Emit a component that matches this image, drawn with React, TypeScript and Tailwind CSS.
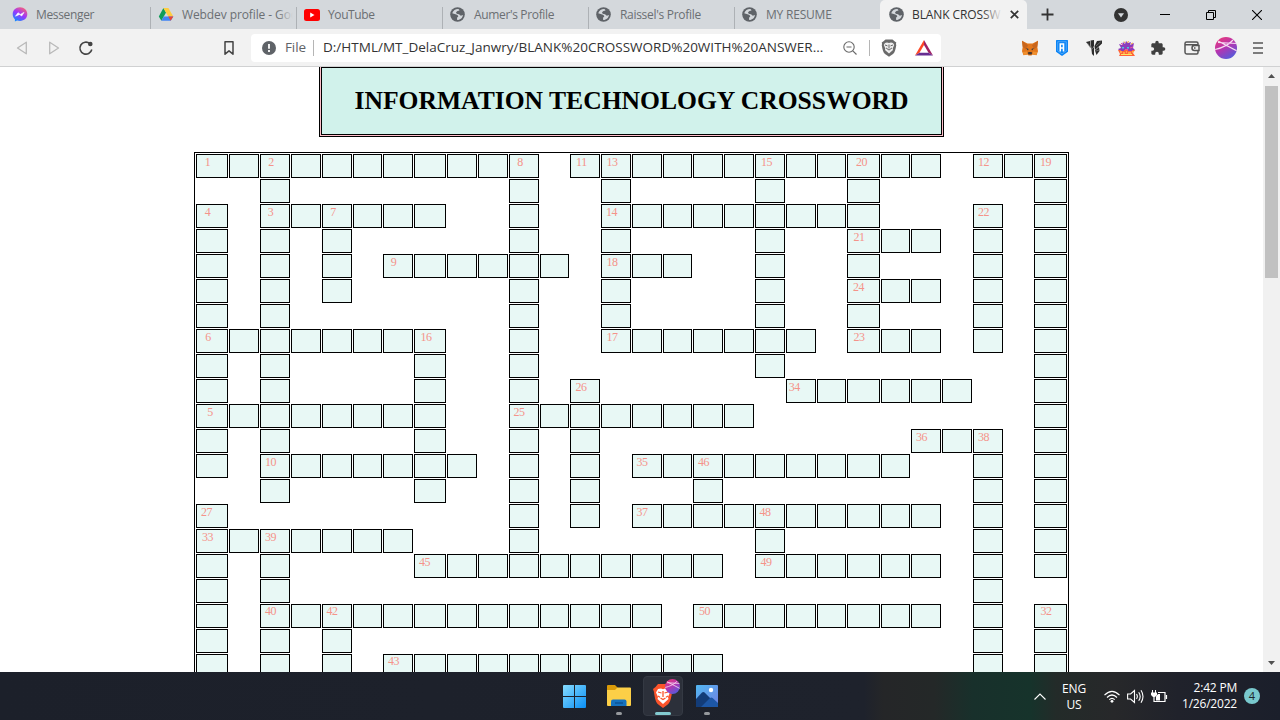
import React from "react";

type Tab = { title: string; icon: "messenger" | "drive" | "youtube" | "globe"; width: string; sep: boolean; tracking: string };

const tabs: Tab[] = [
  { title: "Messenger", icon: "messenger", width: "w-[151px] gap-2 pl-3", sep: true, tracking: "tracking-[-0.35px]" },
  { title: "Webdev profile - Goo", icon: "drive", width: "w-[146px] gap-2 pl-[7px]", sep: true, tracking: "tracking-[-0.1px]" },
  { title: "YouTube", icon: "youtube", width: "w-[146px] gap-2 pl-[7px]", sep: true, tracking: "tracking-[-0.4px]" },
  { title: "Aumer's Profile", icon: "globe", width: "w-[146px] gap-[9px] pl-[7px]", sep: true, tracking: "tracking-[-0.35px]" },
  { title: "Raissel's Profile", icon: "globe", width: "w-[146px] gap-[9px] pl-[7px]", sep: true, tracking: "tracking-[-0.3px]" },
  { title: "MY RESUME", icon: "globe", width: "w-[145px] gap-[9px] pl-[7px]", sep: false, tracking: "tracking-[-0.2px]" },
];

const columnWidths = [32, 30, 30, 30, 30, 29, 30, 32, 30, 30, 30, 29, 30, 30, 30, 29, 30, 30, 30, 30, 29, 33, 29, 30, 30, 30, 29, 33];

const rowSpans: [number, number][][] = [
  [[1, 11], [13, 24], [26, 28]],
  [[3, 3], [11, 11], [14, 14], [19, 19], [22, 22], [28, 28]],
  [[1, 1], [3, 8], [11, 11], [14, 22], [26, 26], [28, 28]],
  [[1, 1], [3, 3], [5, 5], [11, 11], [14, 14], [19, 19], [22, 24], [26, 26], [28, 28]],
  [[1, 1], [3, 3], [5, 5], [7, 12], [14, 16], [19, 19], [22, 22], [26, 26], [28, 28]],
  [[1, 1], [3, 3], [5, 5], [11, 11], [14, 14], [19, 19], [22, 24], [26, 26], [28, 28]],
  [[1, 1], [3, 3], [11, 11], [14, 14], [19, 19], [22, 22], [26, 26], [28, 28]],
  [[1, 8], [11, 11], [14, 20], [22, 24], [26, 26], [28, 28]],
  [[1, 1], [3, 3], [8, 8], [11, 11], [19, 19], [28, 28]],
  [[1, 1], [3, 3], [8, 8], [11, 11], [13, 13], [20, 25], [28, 28]],
  [[1, 8], [11, 18], [28, 28]],
  [[1, 1], [3, 3], [8, 8], [11, 11], [13, 13], [24, 26], [28, 28]],
  [[1, 1], [3, 9], [11, 11], [13, 13], [15, 23], [26, 26], [28, 28]],
  [[3, 3], [8, 8], [11, 11], [13, 13], [17, 17], [26, 26], [28, 28]],
  [[1, 1], [11, 11], [13, 13], [15, 24], [26, 26], [28, 28]],
  [[1, 7], [11, 11], [19, 19], [26, 26], [28, 28]],
  [[1, 1], [3, 3], [8, 17], [19, 24], [26, 26], [28, 28]],
  [[1, 1], [3, 3], [26, 26]],
  [[1, 1], [3, 15], [17, 24], [26, 26], [28, 28]],
  [[1, 1], [3, 3], [5, 5], [26, 26], [28, 28]],
  [[1, 1], [3, 3], [5, 5], [7, 17], [26, 26], [28, 28]],
];

// "row-column": [clue number, distance from the cell's edge to the middle of the number]
const clues: Record<string, [number, number]> = {
  "0-1": [1, 11.5], "0-3": [2, 11], "0-11": [8, 11], "0-13": [11, 11.5], "0-14": [13, 11], "0-19": [15, 11.5],
  "0-22": [20, 14.5], "0-26": [12, 10.7], "0-28": [19, 11.5],
  "2-1": [4, 11.5], "2-3": [3, 10.5], "2-5": [7, 11], "2-14": [14, 10.5], "2-26": [22, 10.5],
  "3-22": [21, 12], "4-7": [9, 10.5], "4-14": [18, 11], "5-22": [24, 11.7],
  "7-1": [6, 12], "7-8": [16, 12], "7-14": [17, 11], "7-22": [23, 12],
  "9-13": [26, 11], "9-20": [34, 8.3], "10-1": [5, 14], "10-11": [25, 10],
  "11-24": [36, 10.5], "11-26": [38, 10.5], "12-3": [10, 10.5], "12-15": [35, 10], "12-17": [46, 10.5],
  "14-1": [27, 10.5], "14-15": [37, 10], "14-19": [48, 10], "15-1": [33, 11.5], "15-3": [39, 10.5],
  "16-8": [45, 10.5], "16-19": [49, 11], "18-3": [40, 10.5], "18-5": [42, 10], "18-17": [50, 11.5], "18-28": [32, 12],
  "20-7": [43, 10.5],
};

function Globe() {
  return (
    <svg className="h-[15px] w-[15px] shrink-0" viewBox="0 0 15 15">
      <circle cx="7.5" cy="7.5" r="7.3" fill="#5f6368" />
      <path d="M8 2C5.600 2 3 3.500 2.200 6.200L5.500 7.300L7.500 8L8.300 9.500L7 10.800L7.200 13C10.500 13 12.800 10.700 13 7.500L10.500 6.800L8.600 7L7 5.700L8.200 4.600L10.500 4.200L10 2.500Z" fill="#d4d8dc" />
      <path d="M8.600 1.800L9.500 3.500L7.500 4L6 5.200L6.700 6.700L9 7.300L10.800 8.700L13 8V5L11 2.500Z" fill="#5f6368" />
    </svg>
  );
}

function TabIcon({ kind }: { kind: Tab["icon"] }) {
  if (kind === "messenger")
    return (
      <svg className="h-[15px] w-[16px] shrink-0" viewBox="0 0 16 15">
        <defs>
          <linearGradient id="msg" x1="0.2" y1="1" x2="0.8" y2="0">
            <stop offset="0" stopColor="#0a90ff" />
            <stop offset="0.5" stopColor="#9a36ff" />
            <stop offset="1" stopColor="#ff6470" />
          </linearGradient>
        </defs>
        <path d="M8 .2C3.700.200.700 3.200.700 7.200c0 2.100.8 3.800 2.200 5.100v2.200l2.200-.9c.9.300 1.900.4 2.900.4 4.300 0 7.300-3 7.300-6.900S12.300.200 8 .2z" fill="url(#msg)" />
        <path d="M3.500 9.200L6 5.700l2.300 1.700 3.700-2L9.700 9 7.500 7.400z" fill="#fff" stroke="#fff" strokeWidth=".6" />
      </svg>
    );
  if (kind === "drive")
    return (
      <svg className="h-[15px] w-[16px] shrink-0" viewBox="0 0 16 15">
        <path d="M5.400 1L.8 9.400l2.600 4.300L8 5.500z" fill="#0f9d58" />
        <path d="M5.400 1h5l4.900 8.400h-5z" fill="#ffcd40" />
        <path d="M5.800 9.400h9.500l-2.600 4.400H3.300z" fill="#4285f4" />
        <path d="M12.700 13.800l2.600-4.400h-5z" fill="#ea4335" />
      </svg>
    );
  if (kind === "youtube")
    return (
      <svg className="h-[12px] w-[16px] shrink-0" viewBox="0 0 16 12">
        <rect width="16" height="12" rx="2.500" fill="#f00" />
        <path d="M6.200 3.500v5L10.500 6z" fill="#fff" />
      </svg>
    );
  return <Globe />;
}

function TabStrip() {
  return (
    <div className="flex h-[29px] bg-[#d4d8dc] text-[12px] text-[#6b6f73]">
      {tabs.map((t, i) => (
        <div key={i} className={`relative flex shrink-0 items-center overflow-hidden whitespace-nowrap ${t.width}`}>
          <TabIcon kind={t.icon} />
          <span className={t.tracking}>{t.title}</span>
          {i === 1 && <span className="absolute right-0 h-full w-5 bg-linear-to-r from-transparent to-[#d4d8dc] to-80%" />}
          {t.sep && <span className="absolute right-0 bottom-0 h-[22px] w-px bg-[#adb1b5]" />}
        </div>
      ))}
      <div className="flex w-[147px] shrink-0 items-center rounded-t-[5px] bg-[#f2f2f2] pl-[9px] text-[#333]">
        <Globe />
        <div className="relative ml-2 w-[90px] whitespace-nowrap tracking-[-0.1px]">
          BLANK CROSSW
          <span className="absolute top-0 right-0 h-full w-5 bg-linear-to-r from-transparent to-[#f2f2f2]" />
        </div>
        <svg className="ml-[8px] h-[9px] w-[9px]" viewBox="0 0 9 9"><path d="M.8.800l7.400 7.400M8.200.800L.8 8.200" stroke="#333" strokeWidth="1.700" /></svg>
      </div>
      <div className="flex grow items-center text-black">
        <svg className="ml-[14px] h-[13px] w-[13px]" viewBox="0 0 13 13"><path d="M6.500.500v12M.5 6.500h12" stroke="#333" strokeWidth="1.800" /></svg>
        <svg className="ml-[60px] h-[14px] w-[14px]" viewBox="0 0 14 14"><circle cx="7" cy="7" r="7" fill="#333" /><path d="M4 5.300h6L7 9.500z" fill="#d4d8dc" /></svg>
        <svg className="ml-8 h-[10px] w-[10px]" viewBox="0 0 10 10"><path d="M0 4.500h10" stroke="#000" /></svg>
        <svg className="ml-9 h-[10px] w-[10px]" viewBox="0 0 10 10"><path d="M.5 2.500h7v7h-7zM2.500 2.500v-2h7v7h-2" fill="none" stroke="#000" /></svg>
        <svg className="ml-9 h-[10px] w-[10px]" viewBox="0 0 10 10"><path d="M0 0l10 10M10 0L0 10" stroke="#000" strokeWidth="1.100" /></svg>
      </div>
    </div>
  );
}

function Ball({ size }: { size: string }) {
  return (
    <svg className={size} viewBox="0 0 22 22">
      <defs>
        <linearGradient id="ball" x1="0.2" y1="0" x2="0.8" y2="1">
          <stop offset="0" stopColor="#e83a7c" />
          <stop offset="0.45" stopColor="#b534b0" />
          <stop offset="1" stopColor="#4b5fe0" />
        </linearGradient>
        <clipPath id="ballclip"><circle cx="11" cy="11" r="11" /></clipPath>
      </defs>
      <g clipPath="url(#ballclip)">
        <rect width="22" height="22" fill="url(#ball)" />
        <path d="M3 4L22 14M0 12.500C7 11 14 7.500 18 3M3 5.500L22 6.500" stroke="#f6dcf2" strokeWidth="1.200" fill="none" />
      </g>
    </svg>
  );
}

function Toolbar() {
  return (
    <div className="flex h-[38px] items-center border-b border-[#d0d1d2] bg-[#f2f2f2]">
      <svg className="ml-[16px] h-[16px] w-[12px]" viewBox="0 0 12 16"><path d="M10.300 2.200v11.600L1.500 8z" fill="none" stroke="#b9b9b9" strokeWidth="1.300" strokeLinejoin="round" /></svg>
      <svg className="ml-[20px] h-[16px] w-[12px]" viewBox="0 0 12 16"><path d="M1.700 2.200v11.600L10.500 8z" fill="none" stroke="#b9b9b9" strokeWidth="1.300" strokeLinejoin="round" /></svg>
      <svg className="ml-[18px] h-[16px] w-[16px]" viewBox="0 0 16 16"><path d="M11.800 3.500A6 6 0 1 0 13.800 9.500" fill="none" stroke="#444" strokeWidth="1.600" /><circle cx="12.300" cy="4" r="2.300" fill="#444" /></svg>
      <svg className="ml-[129px] h-[16px] w-[12px]" viewBox="0 0 12 16"><path d="M2 1.800h8v12.400l-4-3.300-4 3.300z" fill="none" stroke="#444" strokeWidth="1.500" strokeLinejoin="round" /></svg>
      <div className="ml-[16px] flex h-[28px] w-[690px] shrink-0 items-center rounded-[4px] bg-white text-[#333]">
        <svg className="ml-[11px] h-[14px] w-[14px] shrink-0" viewBox="0 0 14 14"><circle cx="7" cy="7" r="7" fill="#5f6368" /><path d="M7 3v4.800M7 9v2" stroke="#fff" strokeWidth="1.800" /></svg>
        <span className="ml-[9px] w-[28px] whitespace-nowrap text-[13.500px] tracking-[-0.1px] text-[#5f6368]">File</span>
        <span className="h-4 w-px bg-[#b5b5b5]" />
        <span className="ml-[9px] w-[514px] whitespace-nowrap text-[13.500px] tracking-[0.01px]">D:/HTML/MT_DelaCruz_Janwry/BLANK%20CROSSWORD%20WITH%20ANSWER...</span>
        <svg className="ml-[6px] h-[14px] w-[14px] shrink-0" viewBox="0 0 14 14"><circle cx="6" cy="6" r="5.200" fill="none" stroke="#6a6a6a" strokeWidth="1.100" /><path d="M3.500 6h5M9.800 9.800l3.700 3.700" stroke="#6a6a6a" strokeWidth="1.200" /></svg>
        <span className="ml-3 h-4 w-px bg-[#b5b5b5]" />
        <svg className="ml-[11px] h-[18px] w-[16px] shrink-0" viewBox="0 0 16 18">
          <path d="M4.500.500h7l2 1.800 1.800 1.200-.4 1.500.4 1c-.8 5-1.500 7.600-3.300 9L8 17.700l-4-2.700C2.200 13.600 1.500 11 .7 6l.4-1-.4-1.500 1.800-1.200z" fill="#6a6a6a" />
          <path d="M4 4l2-.4 2 .5 2-.5 2 .4 1.200 2-1.500 3.600.3 1.400L8 14.500 4 11l.3-1.400L2.800 6z" fill="#eee" />
          <path d="M4 6l2.500.900M12 6l-2.500.900M8 5.500v4M6.300 10L8 11l1.700-1M5 9l1.500.800M11 9l-1.500.800" stroke="#666" strokeWidth="1" fill="none" />
        </svg>
        <svg className="ml-[18px] h-[16px] w-[18px] shrink-0" viewBox="0 0 18 16">
          <path d="M9 0L0 15.500l4.500-2.700L9 5z" fill="#ff4724" />
          <path d="M9 0l9 15.500-4.500-2.700L9 5z" fill="#9e1f63" />
          <path d="M0 15.500h18l-4.500-2.800h-9z" fill="#662d91" />
        </svg>
      </div>
      <svg className="ml-[81px] h-[16px] w-[16px] shrink-0" viewBox="0 0 16 16">
        <path d="M0 .8l5.500 2.700h5L16 .8l-.7 6 .7 4.500-1.500 3.900-4-.7-1 .9h-3l-1-.9-4 .7L0 11.300l.7-4.500z" fill="#e2761b" />
        <path d="M0 .8l6 4.500-2 4-3.300-2.500zM16 .8l-6 4.500 2 4 3.300-2.500z" fill="#c8651c" />
        <path d="M4 8l2.500 1-.5 1.500zM12 8l-2.500 1 .5 1.500z" fill="#233447" />
        <path d="M5.800 13l.7-1h3l.7 1-.7 1.500h-3z" fill="#4a3a32" />
        <path d="M1 12l4-.5.5 3-4 .5zM15 12l-4-.5-.5 3 4 .5z" fill="#f0902f" />
      </svg>
      <svg className="ml-[18px] h-[16px] w-[12px] shrink-0" viewBox="0 0 12 16">
        <path d="M.5 0h11q.5 0 .5.500v11.200L6 16l-6-4.300V.5Q0 0 .5 0z" fill="#0a84f5" />
        <path d="M1.700 1.700h8.600v9.100L6 13.900l-4.300-3.100z" fill="none" stroke="#8cc4fb" strokeWidth=".5" />
        <path d="M4.300 11.500V4h3.200v7.500M4.300 8h3.200" stroke="#fff" strokeWidth="1.600" fill="none" />
      </svg>
      <svg className="ml-[18px] h-[16px] w-[16px] shrink-0" viewBox="0 0 16 16">
        <path d="M0 2l4-1 .8 7zM4.500 .5L8 0v6L5.500 10zM8.500 6L11 1l5-.5v3L9 10zM9 10.500l4-3.500.5 4-3 4zM5.500 10L8 7v9l-2-2z" fill="#2d2d2d" />
        <path d="M1.500 3l3 5M10 6l4.500-4M10 11l3-1" stroke="#999" strokeWidth=".6" />
      </svg>
      <svg className="ml-[16px] h-[16px] w-[17px] shrink-0" viewBox="0 0 17 16">
        <path d="M1 4l3 1 1-3 2 2 1-3 2 2 3-1-1 3 4-2-1 5 2 2-3 1H2L0 9l3-1z" fill="#8c3bbb" />
        <path d="M4 7h2v1.500H4zM9 7h2v1.500H9z" fill="#48c6df" />
        <path d="M3 3l2 2M12 8l3-1M7 9.500h3" stroke="#e953a0" strokeWidth="1" />
        <path d="M6 1.500l1 1.500M10.500 1l-1 2M13 4l2-1" stroke="#f5a13a" strokeWidth="1" />
        <path d="M0 10h3v1h3v-1h4v1h4v-1h3l-2 3 2 3H1l1-2z" fill="#ff6338" />
        <path d="M2 12h2M5 13h2M8 12h1M10 13h3M14 12h2M3 14.500h11" stroke="#ffe45c" strokeWidth="1" />
      </svg>
      <svg className="ml-[15px] h-[16px] w-[16px] shrink-0" viewBox="0 0 24 24"><path d="M20.500 11H19V7c0-1.100-.9-2-2-2h-4V3.500a2.500 2.500 0 0 0-5 0V5H4c-1.100 0-2 .9-2 2v3.800h1.500a2.700 2.700 0 0 1 0 5.400H2V20c0 1.100.9 2 2 2h3.800v-1.500a2.700 2.700 0 0 1 5.400 0V22H17c1.100 0 2-.9 2-2v-4h1.500a2.500 2.500 0 0 0 0-5z" fill="#404040" /></svg>
      <svg className="ml-[18px] h-[14px] w-[16px] shrink-0" viewBox="0 0 16 14"><path d="M14 4V2.500Q14 1 12.500 1h-10Q1 1 1 2.500v8.800Q1 13 2.700 13h10q1.300 0 1.300-1.500V10M1 3.700h13M15 4.500H10.500a2.500 2.500 0 0 0 0 5H15zM10 7h1.500" fill="none" stroke="#555" strokeWidth="1.500" /></svg>
      <Ball size="ml-[15px] h-[22px] w-[22px] shrink-0" />
      <svg className="ml-[16px] h-[12px] w-[10px] shrink-0" viewBox="0 0 10 12"><path d="M0 1h10M0 6h10M0 11h10" stroke="#555" strokeWidth="1.500" /></svg>
    </div>
  );
}

function Crossword() {
  const template = columnWidths.map((w) => `${w}px`).join(" ");
  return (
    <div
      className="mt-[15px] ml-[194px] grid w-[875px] shrink-0 auto-rows-[24px] gap-px border border-black p-px"
      style={{ gridTemplateColumns: template }}
    >
      {rowSpans.flatMap((spans, r) =>
        columnWidths.map((_, i) => {
          const c = i + 1;
          const filled = spans.some(([a, b]) => c >= a && c <= b);
          if (!filled) return <div key={`${r}-${c}`} />;
          const clue = clues[`${r}-${c}`];
          return (
            <div key={`${r}-${c}`} className={`border border-black bg-[#e8f8f5] text-[12px] leading-[12px] tracking-[-0.5px] text-[#f5938a] ${r > 17 ? "pt-0" : "pt-px"}`}>
              {clue && (
                <span className="block w-3 text-center" style={{ marginLeft: `${clue[1] - 7.1}px` }}>{clue[0]}</span>
              )}
            </div>
          );
        })
      )}
    </div>
  );
}

function Page() {
  return (
    <div className="flex h-[605px] overflow-hidden bg-white font-['Liberation_Serif',serif]">
      <div className="flex w-[1263px] shrink-0 flex-col">
        <div className="ml-[319px] h-[70px] w-[625px] shrink-0 border border-t-0 border-black bg-[#ffc0cb] px-px pb-px">
          <h1 className="flex h-[68px] items-center justify-center border border-black bg-[#d1f2eb] text-[25.600px] font-bold whitespace-nowrap text-black">
            INFORMATION TECHNOLOGY CROSSWORD
          </h1>
        </div>
        <Crossword />
      </div>
      <div className="flex w-[17px] flex-col items-center bg-[#f1f1f1]">
        <svg className="mt-[7px] h-[4px] w-[7px] shrink-0" viewBox="0 0 7 4"><path d="M3.500 0L7 4H0z" fill="#505050" /></svg>
        <div className="mt-2 h-[192px] w-[13px] shrink-0 bg-[#c1c1c1]" />
        <svg className="mt-auto mb-[7px] h-[4px] w-[7px] shrink-0" viewBox="0 0 7 4"><path d="M3.500 4L7 0H0z" fill="#505050" /></svg>
      </div>
    </div>
  );
}

function Taskbar() {
  return (
    <div className="flex h-12 items-center bg-[linear-gradient(90deg,#1c202a_0%,#1e222c_67.5%,#252628_69%,#242828_73%,#18302b_76%,#16332b_80.5%,#232b29_82.500%,#27282a_87%,#20222b_92%,#1b1f2b_100%)] text-[12px] text-white">
      <svg className="ml-[563px] h-[23px] w-[23px]" viewBox="0 0 23 23">
        <defs><linearGradient id="win" x1="0" y1="0" x2="1" y2="1"><stop offset="0" stopColor="#86dcff" /><stop offset="1" stopColor="#0a8ff5" /></linearGradient></defs>
        <path d="M0 1q0-1 1-1h10v11H0zM12 0h10q1 0 1 1v10H12zM0 12h11v11H1q-1 0-1-1zM12 12h11v10q0 1-1 1H12z" fill="url(#win)" />
      </svg>
      <div className="ml-[21px] flex h-10 w-[24px] flex-col items-center">
        <svg className="mt-[9px] h-[22px] w-[24px]" viewBox="0 0 24 22">
          <path d="M0 1q0-1 1-1h7l2.500 2.500V5H0z" fill="#d99a08" />
          <path d="M0 5h8l2.500-2.500H23q1 0 1 1V20q0 1-1 1H1q-1 0-1-1z" fill="#fccf47" />
          <path d="M4 21v-4.500Q4 14.500 6 14.500h11.500q2 0 2 2V21z" fill="#1672be" />
          <path d="M8 18h8" stroke="#0c4b89" strokeWidth="1.200" />
        </svg>
        <span className="mt-[5px] h-[3px] w-[6px] rounded-full bg-[#96999d]" />
      </div>
      <div className="relative ml-[12px] flex h-10 w-10 flex-col items-center rounded-[4px] border border-[#343943] bg-[#2c303a]">
        <svg className="mt-[7px] h-[24px] w-[20px]" viewBox="0 0 20 24">
          <path d="M5 0h10l2.500 3L20 5l-1 3c-.8 7-2 10.500-4 12.300L10 24l-5-3.700C3 18.500 1.800 15 1 8L0 5l2.500-2z" fill="#fb542b" />
          <path d="M5 5l3-.5 2 .7 2-.7 3 .5 2 3.500-2 4.500.5 2L10 20l-5.500-5 .5-2-2-4.500z" fill="#fff" />
          <path d="M5 8l3.500 1M15 8l-3.500 1M10 7v6M7.500 14l2.500 1.500 2.500-1.500M5 12l2 1.200M15 12l-2 1.200" stroke="#fb542b" strokeWidth="1.300" fill="none" />
        </svg>
        <Ball size="absolute top-[2px] left-[21px] h-[15px] w-[15px]" />
        <span className="mt-[4px] h-[3px] w-4 shrink-0 rounded-full bg-[#83cbd0]" />
      </div>
      <div className="ml-[13px] flex h-10 w-[22px] flex-col items-center">
        <svg className="mt-[9px] h-[22px] w-[22px]" viewBox="0 0 22 22">
          <defs><linearGradient id="sky" x1="0" y1="0" x2="1" y2="1"><stop offset="0" stopColor="#52b7f2" /><stop offset="1" stopColor="#707fe0" /></linearGradient></defs>
          <rect width="22" height="22" rx="1" fill="url(#sky)" />
          <path d="M0 14L6 7.500q1.300-1 2.600 0L22 21v1H0z" fill="#133c78" />
          <path d="M10 17l4-4q1.300-1 2.600 0l5.400 5v4H5z" fill="#1d57a6" />
          <circle cx="15" cy="5" r="2.200" fill="#fff" />
        </svg>
        <span className="mt-[5px] h-[3px] w-[6px] rounded-full bg-[#96999d]" />
      </div>
      <svg className="ml-[316px] h-[7px] w-[12px]" viewBox="0 0 12 7"><path d="M.5 6.500L6 1l5.500 5.500" stroke="#fff" strokeWidth="1.100" fill="none" /></svg>
      <div className="ml-[12px] w-[32px] pt-px text-center leading-4 tracking-[-0.2px]"><div>ENG</div><div>US</div></div>
      <svg className="ml-[13px] h-[13px] w-[18px]" viewBox="0 0 18 13"><path d="M1.500 5.200Q9-2.500 16.500 5.200M4 7.500Q9 2.500 14 7.500M6.300 9.700Q9 7 11.700 9.700" fill="none" stroke="#fff" strokeWidth="1.200" /><circle cx="9" cy="11.300" r="1.400" fill="#fff" /></svg>
      <svg className="ml-[6px] h-[15px] w-[17px]" viewBox="0 0 17 15"><path d="M.6 5h3l3.900-3.500v12L3.600 10h-3zM9.500 5.200q1.700 2.300 0 4.600M11.700 3.200q3 4.300 0 8.600M14 1.300q4 6.200 0 12.400" fill="none" stroke="#fff" strokeWidth="1.100" /></svg>
      <svg className="ml-[7px] h-[13px] w-[17px]" viewBox="0 0 17 13"><path d="M1.500 0v3M4.500 0v3" stroke="#fff" /><path d="M0 2.500h6V5L4 7H2L0 5zM5 10.500V6.500L7 4h2v6.500z" fill="#fff" /><path d="M3 6.500v5h11V2.500H7M15.500 5v4" fill="none" stroke="#fff" strokeWidth="1.200" /></svg>
      <div className="ml-[12px] w-[57px] text-right leading-4 whitespace-nowrap tracking-[-0.2px]"><div>2:42 PM</div><div>1/26/2022</div></div>
      <div className="ml-[7px] flex h-4 w-4 items-center justify-center rounded-full bg-[#79c9ce] text-[11px] text-[#1c252b]">4</div>
    </div>
  );
}

export default function App() {
  return (
    <div className="h-[720px] w-[1280px] overflow-hidden bg-white font-['Open_Sans',sans-serif]">
      <TabStrip />
      <Toolbar />
      <Page />
      <Taskbar />
    </div>
  );
}
